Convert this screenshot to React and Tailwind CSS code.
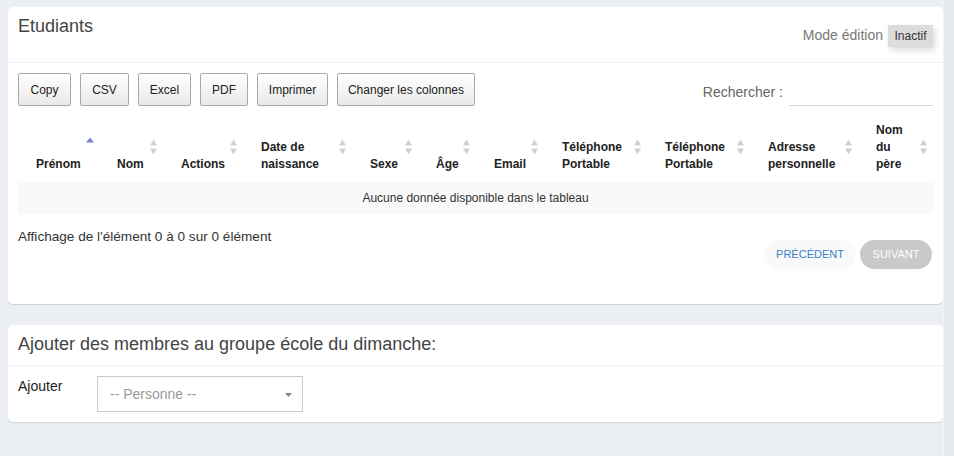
import React from "react";

const cols = [
  { label: ["Prénom"], w: 81, active: true },
  { label: ["Nom"], w: 64 },
  { label: ["Actions"], w: 80 },
  { label: ["Date de", "naissance"], w: 109 },
  { label: ["Sexe"], w: 66 },
  { label: ["Âge"], w: 58 },
  { label: ["Email"], w: 68 },
  { label: ["Téléphone", "Portable"], w: 103 },
  { label: ["Téléphone", "Portable"], w: 103 },
  { label: ["Adresse", "personnelle"], w: 108 },
  { label: ["Nom", "du", "père"], w: 75 },
];

function SortIcon({ active }) {
  if (active) {
    return (
      <svg width="8" height="15" viewBox="0 0 8 15" className="absolute right-[5px] top-1/2 -translate-y-1/2 mt-[-1px]">
        <polygon points="4,0 8,5 0,5" fill="#7c80d4" />
      </svg>
    );
  }
  return (
    <svg width="7" height="15" viewBox="0 0 7 15" className="absolute right-[6px] top-1/2 -translate-y-1/2 mt-[1px]">
      <polygon points="3.5,0 7,6 0,6" fill="#d0d0d0" />
      <polygon points="0,9 7,9 3.5,15" fill="#d0d0d0" />
    </svg>
  );
}

function Btn({ children, w }) {
  return (
    <button
      className={`h-[33px] ${w} border border-[#a9a9a9] rounded-[2px] bg-gradient-to-b from-white to-[#e9e9e9] text-[12px] text-[#222] leading-none whitespace-nowrap`}
    >
      {children}
    </button>
  );
}

export default function App() {
  return (
    <div
      className="min-h-[456px] bg-[#ebeef2] flex"
      style={{ fontFamily: '"Liberation Sans", Arial, Helvetica, sans-serif' }}
    >
      <div className="w-[943px] pl-2 pt-[7px] pb-[34px]">
        {/* Card 1 */}
        <div className="bg-white rounded-[5px] shadow-[0_1px_1px_rgba(0,0,0,0.12)] pb-[35px]">
          <div className="flex justify-between h-[56px] border-b border-[#eef0f3] pl-[10px] pr-[10px]">
            <div className="pt-2 text-[18px] leading-[22px] text-[#444]">Etudiants</div>
            <div className="flex items-start pt-[18px] gap-[5px]">
              <span className="text-[14px] leading-[20px] text-[#777]">Mode édition</span>
              <span className="h-[22px] w-[45px] flex items-center justify-center bg-[#dcdcdc] text-[12px] text-[#333] shadow-[2px_3px_6px_rgba(0,0,0,0.15)]">
                Inactif
              </span>
            </div>
          </div>

          <div className="px-[10px] pt-[10px]">
            <div className="flex justify-between items-start">
              <div className="flex gap-[9px]">
                <Btn w="w-[53px]">Copy</Btn>
                <Btn w="w-[49px]">CSV</Btn>
                <Btn w="w-[53px]">Excel</Btn>
                <Btn w="w-[48px]">PDF</Btn>
                <Btn w="w-[71px]">Imprimer</Btn>
                <Btn w="w-[138px]">Changer les colonnes</Btn>
              </div>
              <div className="flex items-end gap-[6px] h-[33px]">
                <span className="text-[14px] leading-[17px] text-[#666] pb-[5px]">Rechercher :</span>
                <div className="w-[144px] h-[26px] border-b border-[#d5d5d5]"></div>
              </div>
            </div>

            <table className="mt-[4px] w-[915px] table-fixed border-collapse">
              <colgroup>
                {cols.map((c, i) => (
                  <col key={i} style={{ width: c.w }} />
                ))}
              </colgroup>
              <thead>
                <tr>
                  {cols.map((c, i) => (
                    <th
                      key={i}
                      className="relative align-bottom text-left pl-[18px] pr-[14px] pt-[12px] pb-[9px] text-[12px] leading-[17px] font-bold text-[#222]"
                    >
                      {c.label.map((l, j) => (
                        <div key={j} className="whitespace-nowrap">{l}</div>
                      ))}
                      <SortIcon active={c.active} />
                    </th>
                  ))}
                </tr>
              </thead>
              <tbody>
                <tr>
                  <td colSpan={11} className="h-[32px] bg-[#f9f9f9] text-center text-[12px] text-[#333]">
                    Aucune donnée disponible dans le tableau
                  </td>
                </tr>
              </tbody>
            </table>

            <div className="flex justify-between items-start">
              <div className="pt-[14px] text-[13.6px] leading-[17px] text-[#333]">
                Affichage de l'élément 0 à 0 sur 0 élément
              </div>
              <div className="pt-[26px] pr-[1px] flex gap-[4px]">
                <span className="h-[29px] w-[92px] rounded-full bg-[#f9f9f9] flex items-center justify-center text-[11px] text-[#3a7fcb]">
                  PRÉCÉDENT
                </span>
                <span className="h-[29px] w-[72px] rounded-full bg-[#c9c9c9] flex items-center justify-center text-[11px] text-white">
                  SUIVANT
                </span>
              </div>
            </div>
          </div>
        </div>

        {/* Card 2 */}
        <div className="mt-[21px] bg-white rounded-[5px] shadow-[0_1px_1px_rgba(0,0,0,0.12)]">
          <div className="h-[41px] border-b border-[#eef0f3] px-[10px] pt-[8px] text-[18px] leading-[22px] text-[#444]">
            Ajouter des membres au groupe école du dimanche:
          </div>
          <div className="flex px-[10px] pt-[10px] pb-[10px]">
            <div className="w-[79px] pt-[2px] text-[14px] leading-[17px] text-[#222]">Ajouter</div>
            <div className="relative w-[206px] h-[36px] border border-[#ccc] flex items-center pl-[12px] text-[14px] text-[#999]">
              -- Personne --
              <svg width="7" height="4" viewBox="0 0 7 4" className="absolute right-[10px] top-[16px]">
                <polygon points="0,0 7,0 3.5,4" fill="#888" />
              </svg>
            </div>
          </div>
        </div>
      </div>
      <div className="flex-1 bg-[#e7eaee] border-l border-[#f1f3f5]"></div>
    </div>
  );
}
